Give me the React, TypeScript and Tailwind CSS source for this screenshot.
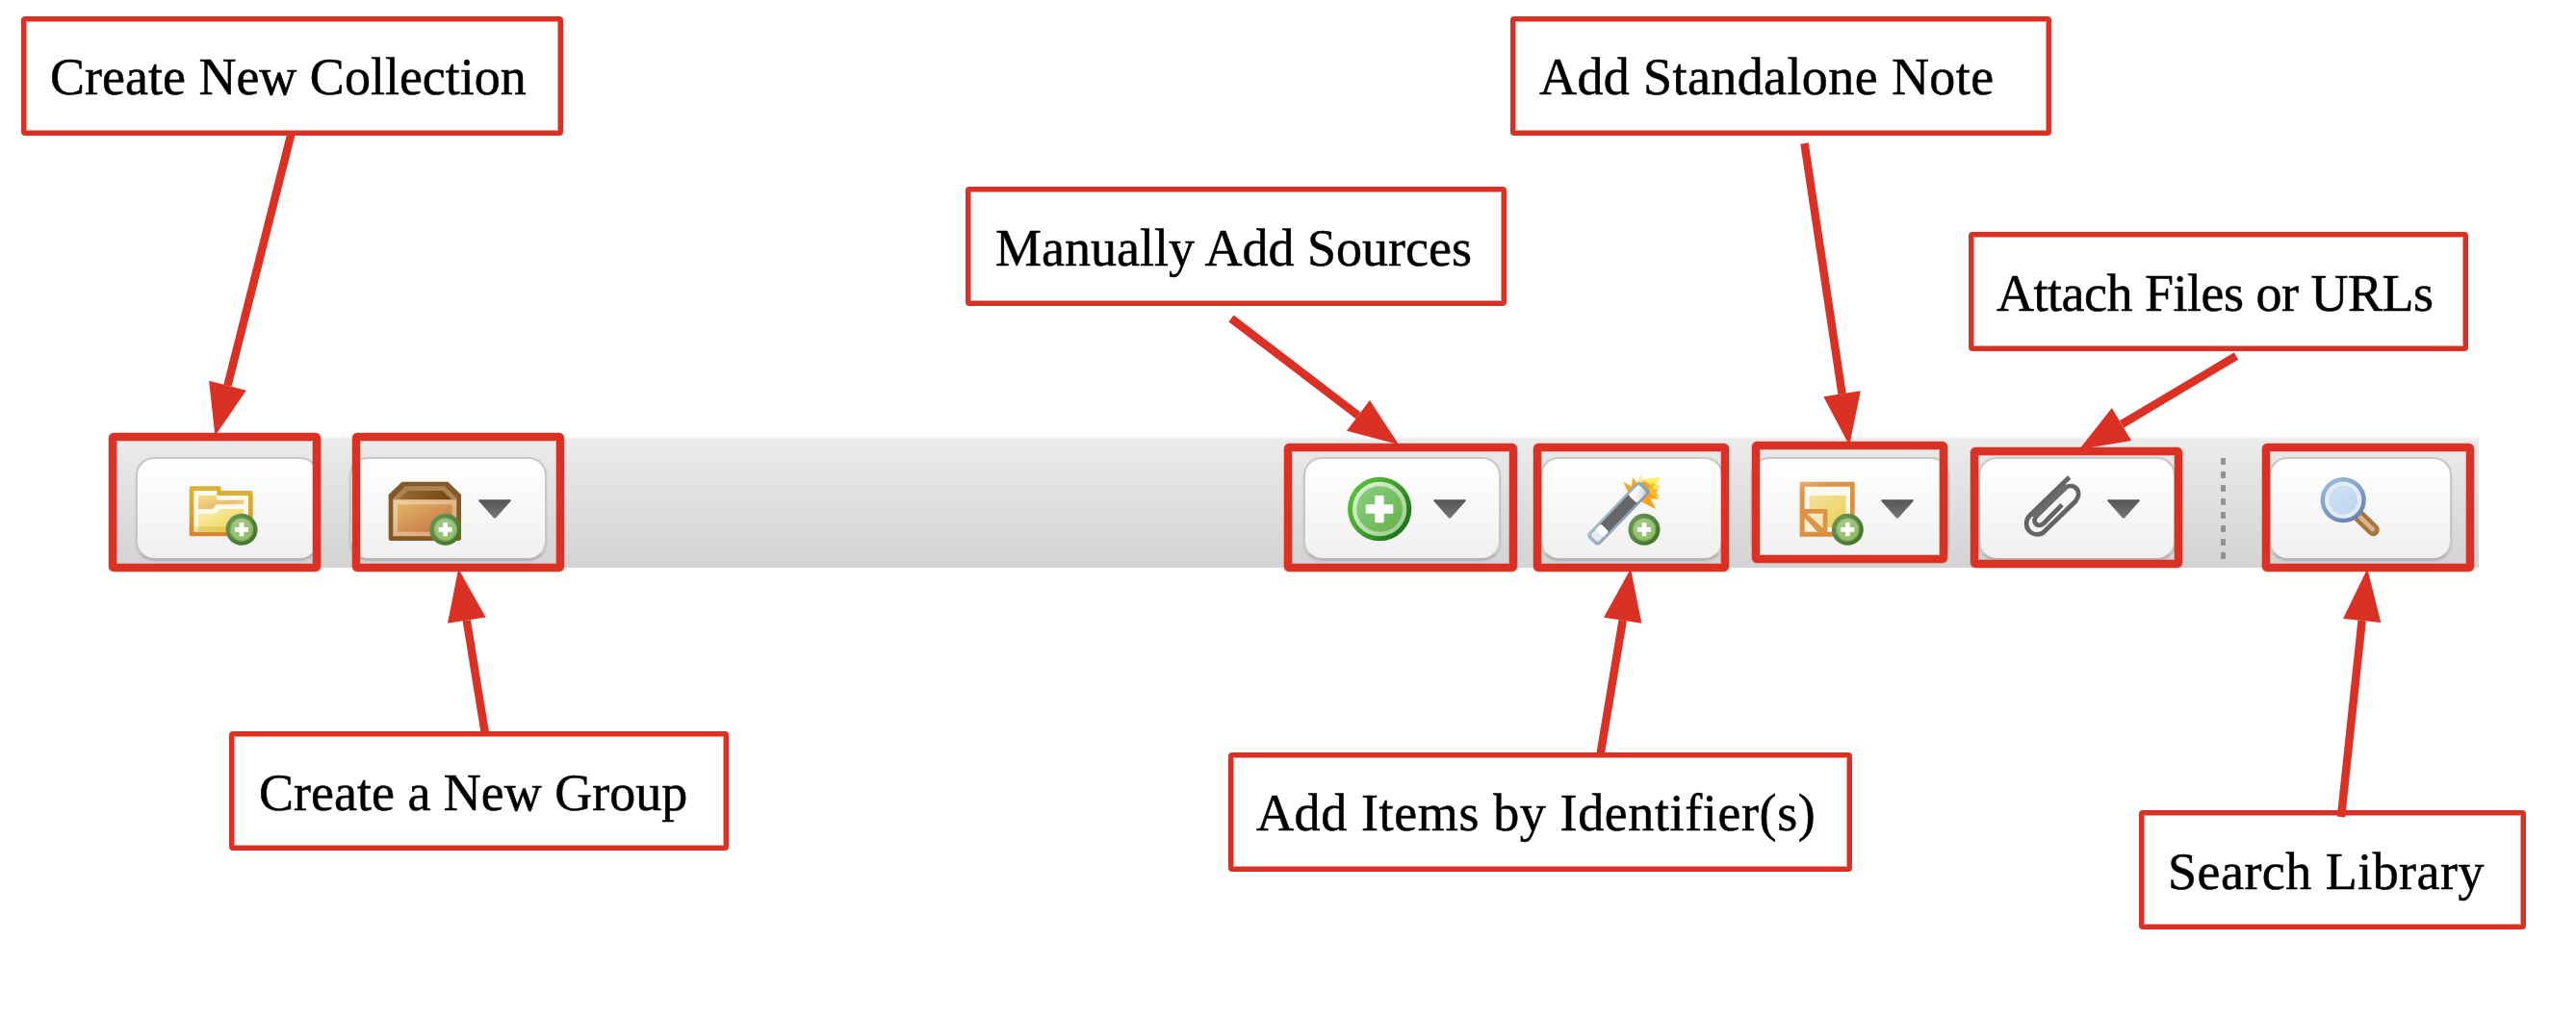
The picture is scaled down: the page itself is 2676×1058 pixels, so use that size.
import type { ReactNode } from "react";

const RED = "#da3124";

/* ---------- icons ---------- */

function Icon({ x, className, children }: { x: number; className: string; children: ReactNode }) {
  return (
    <svg
      viewBox={`${x} 159 228 228`}
      className={`h-[76px] w-[76px] shrink-0 overflow-visible ${className}`}
    >
      {children}
    </svg>
  );
}

function Caret({ className }: { className: string }) {
  return (
    <svg viewBox="0 0 102 60" className={`mt-[26px] h-[20px] w-[34px] shrink-0 ${className}`}>
      <defs>
        <linearGradient id="caret" x1="0" y1="0" x2="0" y2="1">
          <stop offset="0" stopColor="#555" />
          <stop offset="1" stopColor="#777" />
        </linearGradient>
      </defs>
      <path d="M1 1H101V5L55 57Q51 61 47 57L1 5Z" fill="url(#caret)" />
    </svg>
  );
}

function Badge({ cx }: { cx: number }) {
  return (
    <g transform={`translate(${cx} 331)`}>
      <defs>
        <linearGradient id="badge" x1="0" y1="0" x2="1" y2="1">
          <stop offset="0" stopColor="#6d9a5c" />
          <stop offset="1" stopColor="#3d6f1f" />
        </linearGradient>
        <linearGradient id="badgeIn" x1="0" y1="0" x2="0.6" y2="1">
          <stop offset="0" stopColor="#a6cb8e" />
          <stop offset="1" stopColor="#92bd66" />
        </linearGradient>
      </defs>
      <circle r="49.5" fill="url(#badge)" />
      <circle r="35" fill="url(#badgeIn)" stroke="#7fab62" strokeWidth="4" />
      <path d="M-7-21H7V-7H21V7H7V21H-7V7H-21V-7H-7Z" fill="#fff" />
    </g>
  );
}

function FolderIcon() {
  return (
    <Icon x={285} className="ml-[52px]">
      <defs>
        <linearGradient id="fEdge" x1="0" y1="0" x2="0" y2="1">
          <stop offset="0" stopColor="#dcb333" />
          <stop offset="0.5" stopColor="#dba431" />
          <stop offset="1" stopColor="#d8832c" />
        </linearGradient>
        <linearGradient id="fFront" x1="0" y1="0" x2="1" y2="1">
          <stop offset="0" stopColor="#fbf0b4" />
          <stop offset="1" stopColor="#edd045" />
        </linearGradient>
        <linearGradient id="fBack" x1="0" y1="0" x2="1" y2="1">
          <stop offset="0" stopColor="#f7e08c" />
          <stop offset="0.6" stopColor="#e9bc6c" />
          <stop offset="1" stopColor="#f7e6a0" />
        </linearGradient>
      </defs>
      <path
        d="M296 196H384Q389 196 389 202V210H480Q488 210 488 219V344Q488 352 480 352H296Q290 352 290 344V204Q290 196 296 196Z"
        fill="url(#fEdge)"
      />
      <path d="M304 210H376V225H474V338H304Z" fill="#fffaea" />
      <path d="M318 225H375V239H460V253H374L361 267H318Z" fill="url(#fBack)" />
      <path d="M318 281H372L387 267H460V338H318Z" fill="url(#fFront)" />
      <path d="M304 322H460V338H304Z" fill="#c9a52c" opacity="0.3" />
      <Badge cx={453} />
    </Icon>
  );
}

function BoxIcon() {
  return (
    <Icon x={156} className="ml-[37px]">
      <defs>
        <linearGradient id="bFace" x1="0" y1="0" x2="1" y2="1">
          <stop offset="0" stopColor="#e1b466" />
          <stop offset="1" stopColor="#c66f41" />
        </linearGradient>
        <linearGradient id="bIn" x1="0" y1="0" x2="1" y2="0">
          <stop offset="0" stopColor="#996b31" />
          <stop offset="1" stopColor="#71460d" />
        </linearGradient>
        <linearGradient id="bRim" x1="0" y1="0" x2="1" y2="1">
          <stop offset="0" stopColor="#ecd0a0" />
          <stop offset="1" stopColor="#d6a074" />
        </linearGradient>
      </defs>
      <path
        d="M203 182H346L387 222V358Q387 366 379 366H169Q161 366 161 358V222Z"
        fill="#83592a"
      />
      <path d="M213 196H336L374 234V238H175V234Z" fill="#ad8452" />
      <path d="M220 210H329L358 238H192Z" fill="url(#bIn)" />
      <path d="M175 238H373V352H175Z" fill="url(#bRim)" />
      <path d="M189 253H359V338H189Z" fill="url(#bFace)" />
      <Badge cx={338} />
    </Icon>
  );
}

function PlusIcon() {
  return (
    <Icon x={225} className="ml-[39px]">
      <defs>
        <linearGradient id="pEdge" x1="0" y1="0.1" x2="1" y2="0.8">
          <stop offset="0" stopColor="#5bc93b" />
          <stop offset="0.45" stopColor="#45a52d" />
          <stop offset="1" stopColor="#176b19" />
        </linearGradient>
        <linearGradient id="pFill" x1="0" y1="0" x2="1" y2="1">
          <stop offset="0" stopColor="#8bd282" />
          <stop offset="1" stopColor="#66af47" />
        </linearGradient>
        <linearGradient id="pRing" x1="0" y1="0" x2="1" y2="1">
          <stop offset="0" stopColor="#e4f4df" />
          <stop offset="1" stopColor="#97c98a" />
        </linearGradient>
      </defs>
      <circle cx="339.500" cy="267" r="99.500" fill="url(#pEdge)" />
      <circle cx="339.500" cy="267" r="78" fill="url(#pFill)" stroke="url(#pRing)" strokeWidth="13" />
      <path
        d="M328 225H350Q353 225 353 228V253H378Q382 253 382 257V278Q382 281 378 281H353V307Q353 310 350 310H328Q325 310 325 307V281H300Q296 281 296 278V257Q296 253 300 253H325V228Q325 225 328 225Z"
        fill="#fff"
      />
    </Icon>
  );
}

function WandIcon() {
  return (
    <Icon x={207} className="ml-[47px]">
      <defs>
        <linearGradient id="wTip" x1="0" y1="0" x2="1" y2="1">
          <stop offset="0" stopColor="#fff" />
          <stop offset="0.5" stopColor="#f4f4f4" />
          <stop offset="1" stopColor="#bcc9d0" />
        </linearGradient>
        <linearGradient id="wEdge" x1="0" y1="0" x2="1" y2="1">
          <stop offset="0" stopColor="#a9bfcc" />
          <stop offset="1" stopColor="#8298a6" />
        </linearGradient>
      </defs>
      <path
        d="M319 182L344 196L347 167L362 183L374 162L381 178L402 169L398 181L434 168L424 188L434 202L420 208L434 234L408 235L420 267L374 242L336 220Z"
        fill="#ffe88a"
      />
      <path
        d="M319 182L345 198L348 170L364 192L388 178L396 186L418 180L410 202L430 208L408 218L430 236L402 235L420 267L372 243L336 218Z"
        fill="#faa21e"
      />
      <path d="M400 172L434 168L420 186L434 203L414 206L404 193L385 181Z" fill="#fff05a" />
      <path d="M404 190L420 186L412 200L430 228L408 224L398 206Z" fill="#fbb92e" />
      <g transform="translate(303 282) rotate(-46)">
        <rect x="-119" y="-26" width="240" height="52" rx="14" fill="url(#wEdge)" />
        <rect x="-108" y="-16" width="40" height="32" rx="8" fill="#e3ebf0" />
        <rect x="-66" y="-18" width="132" height="36" fill="#666" />
        <rect x="64" y="-18" width="46" height="36" rx="6" fill="url(#wTip)" />
        <rect x="-84" y="-17" width="24" height="34" rx="5" fill="#fff" />
      </g>
      <Badge cx={384} />
    </Icon>
  );
}

function NoteIcon() {
  return (
    <Icon x={204} className="ml-[47px]">
      <defs>
        <linearGradient id="nEdge" x1="0" y1="0" x2="0.3" y2="1">
          <stop offset="0" stopColor="#e8b072" />
          <stop offset="0.2" stopColor="#dc9349" />
          <stop offset="1" stopColor="#dc8a38" />
        </linearGradient>
        <linearGradient id="nFill" x1="0" y1="0" x2="1" y2="1">
          <stop offset="0" stopColor="#f3e2a0" />
          <stop offset="1" stopColor="#ebcf52" />
        </linearGradient>
      </defs>
      <path d="M209 182H380V353H209Z" fill="url(#nEdge)" />
      <path d="M224 197H366V338H224Z" fill="#fffaf0" />
      <path d="M238 225H353V325H238Z" fill="url(#nFill)" />
      <path d="M217 267H295V345H217Z" fill="#dc9444" />
      <path d="M231 281H281V326Z" fill="#f8e9bd" />
      <path d="M224 295V338H264Z" fill="#fbf3d2" />
      <Badge cx={358} />
    </Icon>
  );
}

function ClipIcon() {
  return (
    <Icon x={210} className="ml-[43px]">
      <path
        d="M359 168L236 287C209 318 238 359 276 342L378 243C402 214 375 183 347 200L258 287C240 305 259 329 279 312L336 254"
        fill="none"
        stroke="#646464"
        strokeWidth="14.500"
      />
      <path d="M346 188L242 288L253 298L356 202Z" fill="#6c6c6c" />
    </Icon>
  );
}

function SearchIcon() {
  return (
    <Icon x={267} className="ml-[50px]">
      <defs>
        <linearGradient id="sEdge" x1="0" y1="0" x2="0.6" y2="1">
          <stop offset="0" stopColor="#a6c0df" />
          <stop offset="1" stopColor="#6685b4" />
        </linearGradient>
        <linearGradient id="sFill" x1="0" y1="0" x2="1" y2="1">
          <stop offset="0" stopColor="#d0e2f6" />
          <stop offset="1" stopColor="#bcd4ee" />
        </linearGradient>
      </defs>
      <path d="M386 283L436 332" stroke="#a6763b" strokeWidth="39" strokeLinecap="round" />
      <path d="M386 283L434 330" stroke="#d9b48c" strokeWidth="14" strokeLinecap="round" />
      <circle cx="342.500" cy="239" r="71" fill="url(#sEdge)" />
      <circle cx="342.500" cy="239" r="51" fill="url(#sFill)" stroke="#e2ecf8" strokeWidth="13" />
    </Icon>
  );
}

/* ---------- toolbar ---------- */

function ToolButton({ className, children }: { className: string; children: ReactNode }) {
  return (
    <button
      className={`flex h-[107px] shrink-0 items-start rounded-[19px] border-2 border-[#c8c8c8] border-b-[#b4b4b4] bg-gradient-to-b from-white to-[#f0f0f0] bg-clip-padding pt-[16px] shadow-[0_1px_2px_rgba(0,0,0,0.18)] ${className}`}
    >
      {children}
    </button>
  );
}

function Toolbar() {
  return (
    <div className="ml-[117px] flex h-[136px] w-[2458px] border-t-2 border-[#f4f4f4] bg-gradient-to-b from-[#ebebeb] to-[#d3d3d3] pt-[19px]">
      <ToolButton className="ml-[24px] w-[190px]">
        <FolderIcon />
      </ToolButton>
      <ToolButton className="ml-[32px] w-[205px]">
        <BoxIcon />
        <Caret className="ml-[19px]" />
      </ToolButton>
      <ToolButton className="ml-[786px] w-[205px]">
        <PlusIcon />
        <Caret className="ml-[18px]" />
      </ToolButton>
      <ToolButton className="ml-[41px] w-[190px]">
        <WandIcon />
      </ToolButton>
      <ToolButton className="ml-[29px] w-[206px]">
        <NoteIcon />
        <Caret className="ml-[10px]" />
      </ToolButton>
      <ToolButton className="ml-[30px] w-[205px]">
        <ClipIcon />
        <Caret className="ml-[13px]" />
      </ToolButton>
      <div className="mt-[1px] ml-[47px] flex h-[106px] w-[5px] shrink-0 flex-col gap-[7px]">
        {Array.from({ length: 8 }, (_, i) => (
          <div key={i} className="h-[7px] w-[5px] rounded-[1px] bg-[#929292]" />
        ))}
      </div>
      <ToolButton className="ml-[45px] w-[190px]">
        <SearchIcon />
      </ToolButton>
    </div>
  );
}

/* ---------- annotations ---------- */

const frames = [
  "left-[113px] top-[450px] w-[220px] h-[144px]",
  "left-[366px] top-[450px] w-[220px] h-[144px]",
  "left-[1334px] top-[461px] w-[242px] h-[133px]",
  "left-[1593px] top-[461px] w-[203px] h-[133px]",
  "left-[1820px] top-[459px] w-[203px] h-[126px]",
  "left-[2047px] top-[465px] w-[220px] h-[125px]",
  "left-[2350px] top-[461px] w-[220px] h-[133px]",
];

const labels = [
  { text: "Create New Collection", at: "left-[22px] top-[17px] w-[563px] pl-[25px] pt-[28px] tracking-[0px]" },
  { text: "Create a New Group", at: "left-[238px] top-[760px] w-[519px] pl-[26px] pt-[29px] tracking-[0px]" },
  { text: "Manually Add Sources", at: "left-[1003px] top-[194px] w-[562px] pl-[26px] pt-[29px] tracking-[0px]" },
  { text: "Add Standalone Note", at: "left-[1569px] top-[17px] w-[562px] pl-[25px] pt-[28px] tracking-[0.4px]" },
  { text: "Attach Files or URLs", at: "left-[2045px] top-[241px] w-[519px] pl-[24px] pt-[29px] tracking-[-0.5px]" },
  { text: "Add Items by Identifier(s)", at: "left-[1276px] top-[782px] w-[648px] pl-[24px] pt-[28px] tracking-[0.62px]" },
  { text: "Search Library", at: "left-[2222px] top-[842px] w-[402px] pl-[25px] pt-[29px] tracking-[0.47px]" },
];

/* start point, tip, and the two back corners of the head */
const arrows = [
  { s: [302.5, 139], t: [223.4, 453], a: [217.1, 395.7], b: [255.8, 405.7] },
  { s: [504, 763], t: [476.2, 591], a: [465, 647.7], b: [504.6, 641.5] },
  { s: [1279, 331], t: [1453, 462], a: [1422.9, 416], b: [1399, 447.7] },
  { s: [1874.5, 149], t: [1921.2, 463], a: [1894.3, 412.3], b: [1932.8, 406.3] },
  { s: [2323, 370], t: [2160, 467], a: [2193.8, 424], b: [2214.2, 458] },
  { s: [1662.5, 784], t: [1694, 591], a: [1666, 641.7], b: [1705.4, 647.7] },
  { s: [2432, 849], t: [2459.3, 591], a: [2434, 643], b: [2473.3, 647] },
];

export default function App() {
  return (
    <main className="relative h-[1058px] w-[2676px] overflow-hidden bg-white pt-[454px]">
      <Toolbar />
      {frames.map((f) => (
        <div
          key={f}
          className={`absolute rounded-[5px] border-8 border-[#da3124] shadow-[inset_0_0_0_1px_rgba(218,49,36,0.3),0_0_0_0.5px_rgba(218,49,36,0.5)] ${f}`}
        />
      ))}
      {labels.map((l) => (
        <div
          key={l.text}
          className={`absolute h-[124px] rounded-[4px] border-[5px] border-[#da3124] bg-white font-['Liberation_Serif',serif] text-[54px] leading-[60px] whitespace-nowrap text-black shadow-[inset_0_0_0_1px_rgba(218,49,36,0.5)] [-webkit-text-stroke:0.5px_#000] ${l.at}`}
        >
          {l.text}
        </div>
      ))}
      <svg viewBox="0 0 2676 1058" className="pointer-events-none absolute inset-0 h-full w-full">
        {arrows.map(({ s, t, a, b }, i) => (
          <g key={i} fill={RED}>
            <path
              d={`M${s[0]} ${s[1]}L${(a[0] + b[0]) / 2} ${(a[1] + b[1]) / 2}`}
              stroke={RED}
              strokeWidth="8.500"
            />
            <path d={`M${t[0]} ${t[1]}L${a[0]} ${a[1]}L${b[0]} ${b[1]}Z`} />
          </g>
        ))}
      </svg>
    </main>
  );
}
